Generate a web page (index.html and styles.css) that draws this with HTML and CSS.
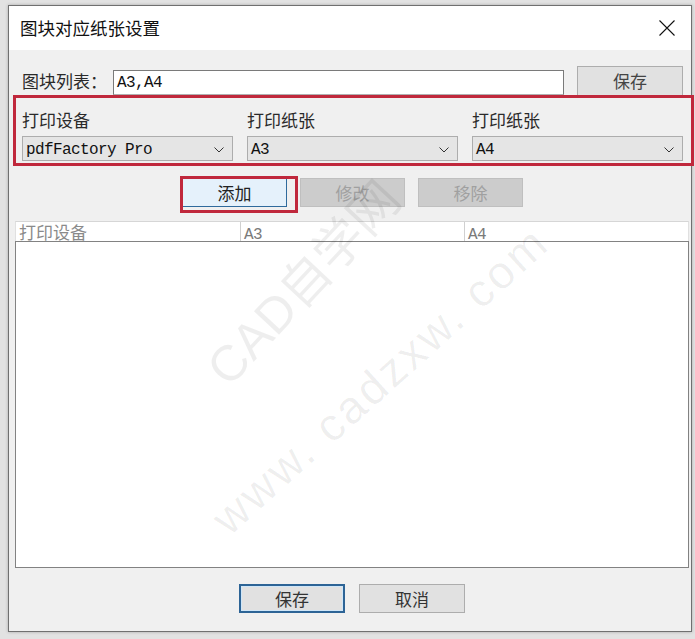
FILE: index.html
```html
<!DOCTYPE html>
<html lang="zh-CN">
<head>
<meta charset="utf-8">
<title>图块对应纸张设置</title>
<link rel="stylesheet" href="styles.css">
</head>
<body>
<div class="dialog">
  <div class="titlebar">
    <span class="title">图块对应纸张设置</span>
    <svg class="close" width="16" height="16" viewBox="0 0 16 16"><path d="M0.5 0.5 L15.5 15.5 M15.5 0.5 L0.5 15.5" stroke="#111" stroke-width="1.1" fill="none"/></svg>
  </div>
  <div class="content">
    <div class="row-list">
      <span class="lbl lbl-list">图块列表：</span>
      <div class="input"><span class="mono">A3,A4</span></div>
      <button class="btn btn-top">保存</button>
    </div>
    <div class="group">
      <div class="field">
        <div class="lbl">打印设备</div>
        <div class="select"><span class="mono">pdfFactory Pro</span><svg class="chev" width="10" height="6" viewBox="0 0 10 6"><path d="M0.5 0.5 L5 5 L9.5 0.5" stroke="#333" stroke-width="1" fill="none"/></svg></div>
      </div>
      <div class="field">
        <div class="lbl">打印纸张</div>
        <div class="select"><span class="mono">A3</span><svg class="chev" width="10" height="6" viewBox="0 0 10 6"><path d="M0.5 0.5 L5 5 L9.5 0.5" stroke="#333" stroke-width="1" fill="none"/></svg></div>
      </div>
      <div class="field">
        <div class="lbl">打印纸张</div>
        <div class="select"><span class="mono">A4</span><svg class="chev" width="10" height="6" viewBox="0 0 10 6"><path d="M0.5 0.5 L5 5 L9.5 0.5" stroke="#333" stroke-width="1" fill="none"/></svg></div>
      </div>
    </div>
    <div class="actions">
      <span class="mark"><button class="btn btn-add">添加</button></span>
      <button class="btn btn-disabled">修改</button>
      <button class="btn btn-disabled">移除</button>
    </div>
    <div class="table">
      <div class="thead">
        <div class="th">打印设备</div>
        <div class="th"><span class="mono">A3</span></div>
        <div class="th"><span class="mono">A4</span></div>
      </div>
      <div class="tbody"></div>
    </div>
    <div class="footer">
      <button class="btn btn-default">保存</button>
      <button class="btn">取消</button>
    </div>
  </div>
  <div class="wm wm1">CAD自学网</div>
  <div class="wm wm2">www. cadzxw. com</div>
</div>
</body>
</html>
```

FILE: styles.css
```css
* { box-sizing: border-box; }
html, body { margin: 0; padding: 0; }
body {
  width: 695px;
  height: 639px;
  background: #e2e2e2;
  padding: 5px 0 0 8px;
  font-family: "Noto Sans CJK SC", sans-serif;
  overflow: hidden;
}
.dialog {
  position: relative;
  width: 684px;
  height: 627px;
  border: 1px solid #707070;
  background: #f0f0f0;
  display: flex;
  flex-direction: column;
  box-shadow: 0 0 3px rgba(0,0,0,0.25);
}
.titlebar {
  height: 44px;
  background: #fff;
  display: flex;
  align-items: center;
  justify-content: space-between;
  padding: 0 16px 0 11px;
}
.title {
  font-size: 17.5px;
  color: #111;
  line-height: 20px;
}
.close { display: block; }
.content {
  flex: 1;
  display: flex;
  flex-direction: column;
  padding: 16px 8px 0 13px;
}
.lbl {
  font-size: 17px;
  line-height: 20px;
  color: #2a2a2a;
  white-space: nowrap;
}
.mono {
  font-family: "Liberation Mono", "Noto Sans CJK SC", monospace;
  font-size: 16px;
  letter-spacing: -0.6px;
  color: #111;
}
.row-list {
  display: flex;
  align-items: center;
  height: 30px;
}
.lbl-list { width: 91px; }
.input {
  width: 451px;
  height: 25px;
  margin-top: 3px;
  background: #fff;
  border: 1px solid #7a7a7a;
  border-bottom-color: #b0b0b0;
  display: flex;
  align-items: center;
  padding-left: 3px;
}
.btn {
  font-family: "Noto Sans CJK SC", sans-serif;
  font-size: 17px;
  color: #333;
  background: #e1e1e1;
  border: 1px solid #adadad;
  height: 29px;
  width: 106px;
  padding: 0;
  line-height: 20px;
  margin: 0;
}
.btn-top {
  margin-left: auto;
  height: 30px;
  color: #444;
}
.group {
  margin: -1px -11px 0 -9px;
  border: 3px solid #c0283c;
  padding: 12px 8px 2px 6px;
  display: grid;
  grid-template-columns: 211px 211px 211px;
  column-gap: 14px;
  position: relative;
}
.field {
  display: flex;
  flex-direction: column;
  gap: 6px;
}
.select {
  height: 25px;
  background: #e5e5e5;
  border: 1px solid #adadad;
  display: flex;
  align-items: center;
  justify-content: space-between;
  padding: 2px 8px 0 3px;
}
.chev { display: block; }
.actions {
  display: flex;
  gap: 13px;
  margin-top: 12px;
  padding-left: 160px;
}
.mark {
  position: relative;
  display: block;
}
.mark::after {
  content: "";
  position: absolute;
  inset: -2px -11px -6px -2px;
  border: 3px solid #c0283c;
  pointer-events: none;
}
.btn-add {
  display: block;
  width: 105px;
  background: #e5f1fb;
  border: 1px solid #2f6a9c;
  color: #222;
}
.btn-disabled {
  width: 105px;
  background: #cccccc;
  border-color: #bfbfbf;
  color: #a0a0a0;
}
.table {
  margin: 14px -6px 0 -7px;
  display: flex;
  flex-direction: column;
}
.thead {
  height: 20px;
  background: #fff;
  border-top: 1px solid #d6d6d6;
  border-left: 1px solid #e0e0e0;
  border-right: 1px solid #e0e0e0;
  display: grid;
  grid-template-columns: 225px 224px 1fr;
}
.th {
  font-size: 17px;
  line-height: 19px;
  height: 19px;
  color: #8a8a8a;
  padding-left: 3px;
  border-right: 1px solid #d0d0d0;
  white-space: nowrap;
}
.th:last-child { border-right: none; }
.th .mono { color: #7a7a7a; }
.tbody {
  height: 327px;
  background: #fff;
  border: 1px solid #828282;
}
.footer {
  display: flex;
  gap: 14px;
  margin-top: 16px;
  padding-left: 217px;
}
.btn-default {
  border: 2px solid #2d6496;
  box-shadow: inset 0 0 0 1px #cfe6f8;
}
.wm {
  position: absolute;
  white-space: nowrap;
  color: rgba(0,0,0,0.065);
  pointer-events: none;
  font-family: "Liberation Sans", "Noto Sans CJK SC", sans-serif;
}
.wm1 {
  left: 291px;
  top: 274px;
  font-size: 50px;
  transform: translate(-50%, -50%) rotate(-47deg);
}
.wm2 {
  left: 371px;
  top: 374px;
  font-size: 46px;
  letter-spacing: 3px;
  transform: translate(-50%, -50%) rotate(-42deg);
}
```
